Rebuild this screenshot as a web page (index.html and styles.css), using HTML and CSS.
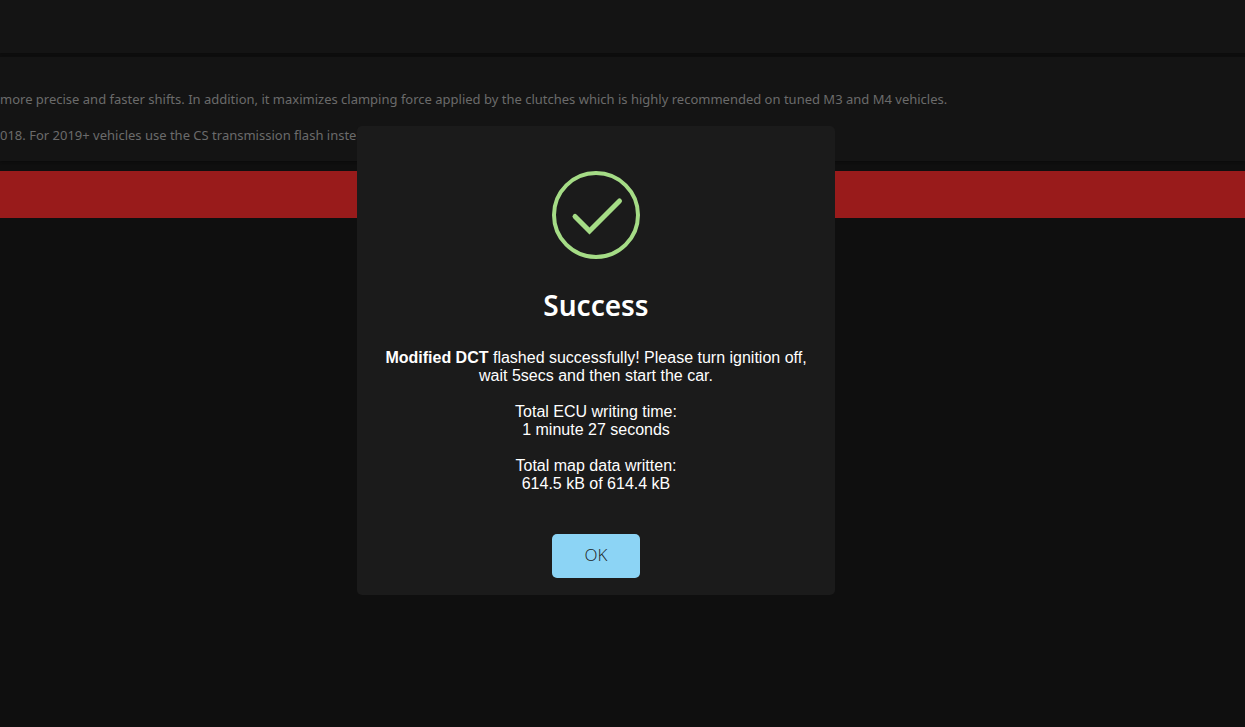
FILE: index.html
```html
<!DOCTYPE html>
<html lang="en">
<head>
<meta charset="utf-8">
<title>Success</title>
<link rel="stylesheet" href="styles.css">
</head>
<body>
<main class="page">
  <header class="topbar"></header>
  <section class="description">
    <p>more precise and faster shifts. In addition, it maximizes clamping force applied by the clutches which is highly recommended on tuned M3 and M4 vehicles.</p>
    <p>018. For 2019+ vehicles use the CS transmission flash instead.</p>
  </section>
  <div class="alert-bar"></div>
</main>
<div class="overlay">
  <div class="modal" role="dialog" aria-modal="true" aria-labelledby="modal-title">
    <svg class="modal-icon" viewBox="0 0 88 88" fill="none" stroke="#a5dc86" aria-hidden="true">
      <circle cx="44" cy="44" r="42" stroke-width="4"/>
      <path d="M23 45.500L37.500 60L67.500 30" stroke-width="5" stroke-linecap="round" stroke-linejoin="miter"/>
    </svg>
    <h2 class="modal-title" id="modal-title">Success</h2>
    <div class="modal-text">
      <p><b>Modified DCT</b> flashed successfully! Please turn ignition off, wait 5secs and then start the car.</p>
      <p>Total ECU writing time:<br>1 minute 27 seconds</p>
      <p>Total map data written:<br>614.5 kB of 614.4 kB</p>
    </div>
    <button class="modal-button" type="button">OK</button>
  </div>
</div>
</body>
</html>
```
FILE: styles.css
```css
* {
  box-sizing: border-box;
}

body {
  margin: 0;
  background: #0f0f0f;
  color: #fff;
  font-family: "Noto Sans", "Open Sans", sans-serif;
  overflow: hidden;
}

.page {
  min-height: 100vh;
}

.topbar {
  height: 53px;
  background: #141414;
  box-shadow: 0 1px 2px #0c0c0c;
}

.description {
  margin-top: 4px;
  padding: 33px 0 17px;
  background: #141414;
  box-shadow: 0 1px 2px #0b0b0b;
  color: #6b6b6b;
  font-size: 13px;
  line-height: 18px;
  white-space: nowrap;
}

.description p {
  margin: 0;
}

.description p + p {
  margin-top: 18px;
}

.alert-bar {
  height: 47px;
  margin-top: 10px;
  background: #991b1b;
}

.overlay {
  position: fixed;
  inset: 0;
  display: flex;
  justify-content: center;
  align-items: center;
  padding: 0 53px 6px 0;
}

.modal {
  display: flex;
  flex-direction: column;
  align-items: center;
  width: 478px;
  max-width: 100%;
  padding: 45px 20px 17px;
  border-radius: 5px;
  background: #1b1b1b;
  text-align: center;
}

.modal-icon {
  width: 88px;
  height: 88px;
}

.modal-title {
  margin: 26px 0 0;
  font-size: 28px;
  font-weight: 600;
  line-height: 40px;
}

.modal-text {
  padding: 24px 0 41px;
  font-family: "Liberation Sans", Arial, sans-serif;
  font-size: 16px;
  line-height: 18px;
}

.modal-text p {
  margin: 0;
}

.modal-text p + p {
  margin-top: 18px;
}

.modal-button {
  width: 88px;
  height: 44px;
  padding: 0 0 2px;
  border: 0;
  border-radius: 5px;
  background: #8cd4f5;
  color: #1c1c1c;
  font-family: "Open Sans", "Noto Sans", sans-serif;
  font-size: 17px;
  font-weight: 300;
  line-height: 24px;
}
```
